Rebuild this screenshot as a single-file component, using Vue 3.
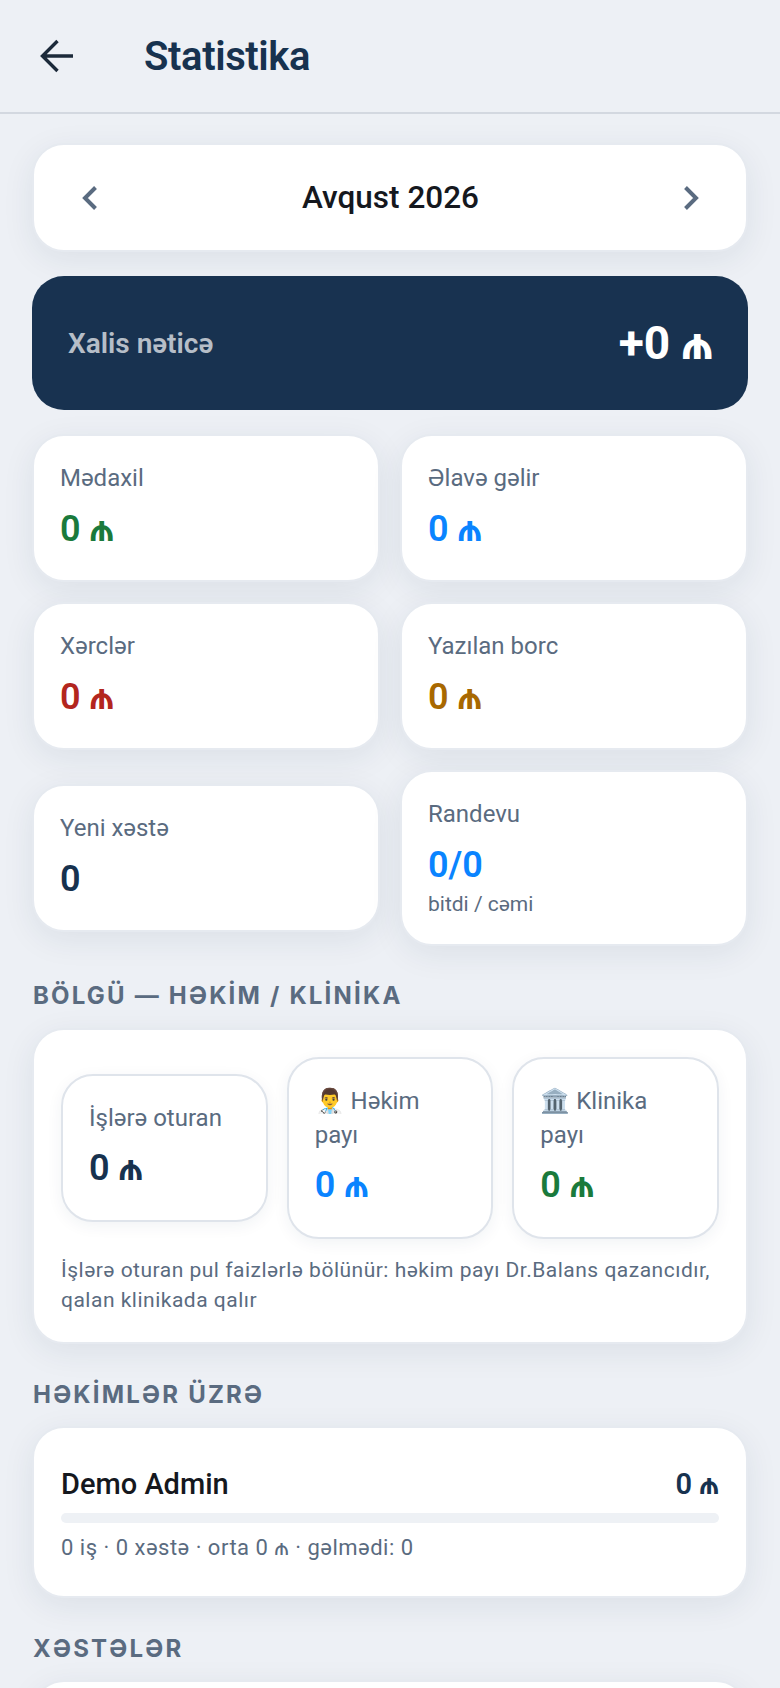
<script setup>
const tiles = [
  { label: "Mədaxil", value: "0 ₼", tone: "green" },
  { label: "Əlavə gəlir", value: "0 ₼", tone: "blue" },
  { label: "Xərclər", value: "0 ₼", tone: "red" },
  { label: "Yazılan borc", value: "0 ₼", tone: "amber" },
  { label: "Yeni xəstə", value: "0", tone: "navy" },
  { label: "Randevu", value: "0/0", tone: "blue", note: "bitdi / cəmi" },
];

const shares = [
  { label: "İşlərə oturan", value: "0 ₼", tone: "navy" },
  { label: "👨‍⚕️ Həkim payı", value: "0 ₼", tone: "blue" },
  { label: "🏛️ Klinika payı", value: "0 ₼", tone: "green" },
];
</script>

<template>
  <div class="page">
    <header class="topbar">
      <button class="back" aria-label="Geri">
        <svg width="36" height="36" viewBox="0 0 36 36" fill="none">
          <path d="M34 18H4M18.500 3 3.500 18 18.500 33" stroke="#1c2a3a" stroke-width="3.400" />
        </svg>
      </button>
      <h1>Statistika</h1>
    </header>

    <main class="content">
      <section class="card month">
        <svg width="20" height="28" viewBox="0 0 20 28" fill="none">
          <path d="M15.500 3.500 5 14l10.500 10.500" stroke="#5a6b80" stroke-width="4" />
        </svg>
        <span>Avqust 2026</span>
        <svg width="20" height="28" viewBox="0 0 20 28" fill="none">
          <path d="M4.500 3.500 15 14 4.500 24.500" stroke="#5a6b80" stroke-width="4" />
        </svg>
      </section>

      <section class="hero">
        <span class="hero-label">Xalis nəticə</span>
        <span class="hero-value">+0 ₼</span>
      </section>

      <section class="tiles">
        <div v-for="t in tiles" :key="t.label" class="card tile">
          <div class="tile-label">{{ t.label }}</div>
          <div class="tile-value" :class="t.tone">{{ t.value }}</div>
          <div v-if="t.note" class="tile-note">{{ t.note }}</div>
        </div>
      </section>

      <h2 class="section-title first">BÖLGÜ — HƏKİM / KLİNİKA</h2>
      <section class="card split">
        <div class="shares">
          <div v-for="s in shares" :key="s.label" class="card share">
            <div class="tile-label">{{ s.label }}</div>
            <div class="tile-value" :class="s.tone">{{ s.value }}</div>
          </div>
        </div>
        <p class="split-note">
          İşlərə oturan pul faizlərlə bölünür: həkim payı Dr.Balans qazancıdır, qalan klinikada qalır
        </p>
      </section>

      <h2 class="section-title">HƏKİMLƏR ÜZRƏ</h2>
      <section class="card doctor">
        <div class="doctor-row">
          <span class="doctor-name">Demo Admin</span>
          <span class="doctor-total">0 ₼</span>
        </div>
        <div class="bar"></div>
        <div class="doctor-meta">0 iş · 0 xəstə · orta 0 ₼ · gəlmədi: 0</div>
      </section>

      <h2 class="section-title">XƏSTƏLƏR</h2>
      <section class="card patients"></section>
    </main>
  </div>
</template>

<style>
html,
body {
  margin: 0;
  background: #edf0f5;
}
</style>

<style scoped>
.page {
  height: 1688px;
  overflow: hidden;
  background: #edf0f5;
  font-family: Roboto, "Noto Sans", sans-serif;
}

.topbar {
  display: flex;
  align-items: center;
  height: 112px;
  padding-left: 39px;
  border-bottom: 2px solid #d3d8e0;
}

.back {
  display: flex;
  width: 36px;
  height: 36px;
  padding: 0;
  border: none;
  background: none;
}

.topbar h1 {
  margin: 0 0 0 69px;
  font-size: 40px;
  font-weight: 600;
  letter-spacing: -0.4px;
  color: #17324f;
}

.content {
  display: flex;
  flex-direction: column;
  padding: 29px 32px 0;
}

.card {
  box-sizing: border-box;
  border: 2px solid #e6eaf0;
  border-radius: 32px;
  background: #fff;
  box-shadow: 0 8px 32px rgba(23, 50, 79, 0.08);
}

.month {
  display: flex;
  align-items: center;
  justify-content: space-between;
  height: 109px;
  padding: 0 45px 0 46px;
  font-size: 31.500px;
  font-weight: 500;
  color: #15181e;
}

.hero {
  display: flex;
  align-items: center;
  justify-content: space-between;
  height: 134px;
  margin-top: 24px;
  padding: 0 35px 0 36px;
  border-radius: 32px;
  background: #183250;
}

.hero-label {
  font-size: 28px;
  font-weight: 600;
  color: rgba(255, 255, 255, 0.7);
}

.hero-value {
  font-size: 46px;
  font-weight: 700;
  color: #fff;
}

.tiles {
  display: grid;
  grid-template-columns: 1fr 1fr;
  gap: 20px;
  align-items: center;
  margin-top: 24px;
}

.tile {
  padding: 26px;
}

.tile-label {
  font-size: 24px;
  line-height: 1.4;
  color: #5a6b80;
}

.tile-value {
  margin-top: 8px;
  font-size: 36px;
  font-weight: 600;
  line-height: 1.4;
}

.tile-note {
  font-size: 21px;
  line-height: 28px;
  color: #5a6b80;
}

.green { color: #1a7a3c; }
.blue { color: #0a84ff; }
.red { color: #b3261e; }
.amber { color: #a86800; }
.navy { color: #17324f; }

.section-title {
  margin: 37px 0 17px;
  padding-left: 1px;
  font-family: Inter, Roboto, sans-serif;
  font-size: 24px;
  font-weight: 700;
  line-height: 28px;
  letter-spacing: 2.200px;
  color: #5a6b80;
}

.section-title.first {
  margin-top: 36px;
  margin-bottom: 18px;
}

.split {
  padding: 27px;
}

.shares {
  display: grid;
  grid-template-columns: repeat(3, 1fr);
  gap: 19px;
  align-items: center;
}

.share {
  padding: 26px;
  border-color: #dfe4eb;
  box-shadow: 0 4px 16px rgba(23, 50, 79, 0.06);
}

.split-note {
  margin: 16px 0 0;
  font-size: 21px;
  line-height: 30px;
  letter-spacing: 0.500px;
  color: #5a6b80;
}

.doctor {
  padding: 39px 27px 33px;
}

.doctor-row {
  display: flex;
  align-items: center;
  justify-content: space-between;
}

.doctor-name {
  font-size: 29px;
  font-weight: 500;
  color: #15181e;
}

.doctor-total {
  font-size: 29px;
  font-weight: 600;
  color: #17324f;
}

.bar {
  height: 10px;
  margin-top: 12px;
  border-radius: 5px;
  background: #eef1f5;
}

.doctor-meta {
  margin-top: 10px;
  font-size: 22px;
  line-height: 30px;
  letter-spacing: 0.500px;
  color: #5a6b80;
}

.patients {
  height: 120px;
}
</style>
